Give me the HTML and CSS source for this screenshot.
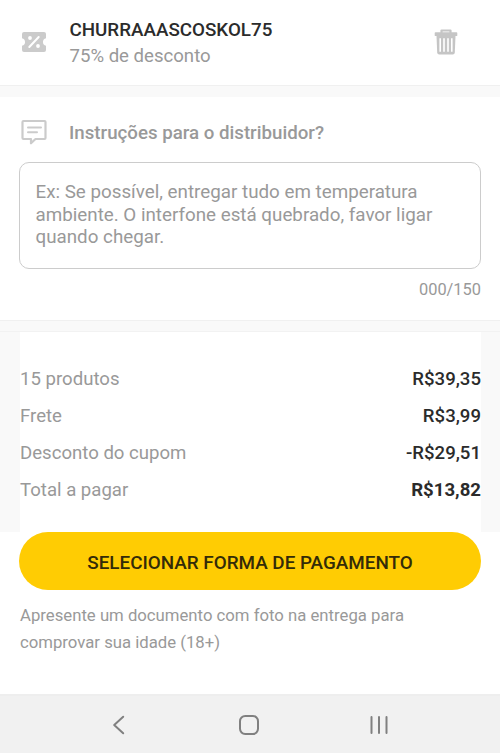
FILE: index.html
```html
<!DOCTYPE html>
<html lang="pt-BR">
<head>
<meta charset="utf-8">
<title>Pagamento</title>
<link rel="stylesheet" href="styles.css">
</head>
<body>
<section class="coupon">
  <svg class="icon" width="26" height="22" viewBox="0 0 26 22"><path fill="#cbcbcb" d="M3 1h20q2 0 2 2v4.200a3.900 3.900 0 0 0 0 7.600V19q0 2-2 2H3q-2 0-2-2v-4.200a3.900 3.900 0 0 0 0-7.600V3q0-2 2-2z"/><path d="M8.300 16L17.700 6" stroke="#fff" stroke-width="2" stroke-linecap="round"/><circle cx="9" cy="7" r="1.900" fill="#fff"/><circle cx="17" cy="15" r="1.900" fill="#fff"/></svg>
  <div class="coupon-text">
    <div class="code">CHURRAAASCOSKOL75</div>
    <div class="discount">75% de desconto</div>
  </div>
  <svg class="trash" width="24" height="28" viewBox="0 0 24 28"><path fill="none" stroke="#c5c5c5" stroke-width="2.200" stroke-linejoin="round" d="M7.500 5V2.500h9V5"/><path fill="#c5c5c5" d="M1.500 4.300h21q.8 0 .8.800v2.300q0 .7-.8.700h-21q-.8 0-.8-.7V5.100q0-.8.8-.8z"/><path fill="#c5c5c5" d="M2.500 8h19l-.7 16.500q-.1 2-2 2H5.200q-1.900 0-2-2z"/><path stroke="#fff" stroke-width="1.600" d="M6.200 10.200v13.600M10 10.200v13.600M14 10.200v13.600M17.800 10.200v13.600"/></svg>
</section>
<div class="divider"></div>
<section class="notes">
  <div class="notes-head">
    <svg class="icon" width="26" height="26" viewBox="0 0 26 26"><path fill="none" stroke="#cbcbcb" stroke-width="2.200" stroke-linejoin="round" d="M2.500 2h21q1 0 1 1v16q0 1-1 1H14.500L10 24.300V20H2.500q-1 0-1-1V3q0-1 1-1z"/><path stroke="#cbcbcb" stroke-width="2" stroke-linecap="round" d="M7 8.500h13M7 13.200h9"/></svg>
    <h2>Instruções para o distribuidor?</h2>
  </div>
  <div class="field">Ex: Se possível, entregar tudo em temperatura<br>ambiente. O interfone está quebrado, favor ligar<br>quando chegar.</div>
  <div class="counter">000/150</div>
</section>
<div class="divider divider-lower"></div>
<div class="summary-wrap">
  <section class="summary">
    <div class="row"><span>15 produtos</span><strong>R$39,35</strong></div>
    <div class="row"><span>Frete</span><strong>R$3,99</strong></div>
    <div class="row"><span>Desconto do cupom</span><strong>-R$29,51</strong></div>
    <div class="row total"><span>Total a pagar</span><strong>R$13,82</strong></div>
  </section>
</div>
<section class="action">
  <button type="button">SELECIONAR FORMA DE PAGAMENTO</button>
  <p>Apresente um documento com foto na entrega para<br>comprovar sua idade (18+)</p>
</section>
<nav>
  <svg width="20" height="24" viewBox="0 0 20 24"><path d="M14.200 3.700L5.200 12l9 8.300"/></svg>
  <svg width="24" height="24" viewBox="0 0 24 24"><rect x="3" y="3" width="18" height="18" rx="5.200"/></svg>
  <svg width="20" height="24" viewBox="0 0 20 24"><path d="M2.500 4v16M10 4v16M17.500 4v16"/></svg>
</nav>
</body>
</html>
```
FILE: styles.css
```css
* { box-sizing: border-box; }
body {
  margin: 0;
  height: 753px;
  display: flex;
  flex-direction: column;
  overflow: hidden;
  background: #fff;
  color: #999;
  font: 18.6px/22px Roboto, "Liberation Sans", sans-serif;
}
svg { display: block; flex: none; }
.coupon {
  height: 85px;
  padding: 17px 42px 0 21px;
  display: flex;
  align-items: flex-start;
}
.coupon .icon { margin-top: 14px; }
.coupon-text { flex: 1; margin-left: 22.500px; line-height: 26px; }
.code { color: #2b2b2b; font-size: 18.800px; font-weight: 500; }
.trash { margin-top: 11px; }
.divider {
  height: 12px;
  flex: none;
  background: #f9f9f9;
  border-top: 1px solid #f0f0f0;
}
.divider-lower { border-bottom: 1px solid #f2f2f2; }
.notes { height: 223px; padding: 22px 19px 0; }
.notes-head { display: flex; height: 26px; padding-left: 2px; }
.notes-head h2 {
  margin: 0 0 0 22px;
  font-size: 18.700px;
  line-height: 28px;
  font-weight: 500;
}
.field {
  height: 107px;
  margin-top: 17px;
  padding: 18px 15.500px;
  border: 1.500px solid #ccc;
  border-radius: 10px;
  white-space: nowrap;
  font-size: 18.800px;
  line-height: 22.500px;
}
.counter { margin-top: 10px; text-align: right; font-size: 16.400px; }
.summary-wrap { height: 200px; padding: 0 19px 0 20px; background: #f9f9f9; }
.summary { height: 100%; padding: 28.500px 0 0; background: #fff; }
.row {
  height: 36.900px;
  display: flex;
  align-items: center;
  justify-content: space-between;
}
.row strong { color: #2b2b2b; font-weight: 500; }
.row.total strong { font-weight: 700; }
.action { flex: 1; padding: 0 19px; }
button {
  display: block;
  width: 100%;
  height: 58px;
  padding: 4px 0 0;
  border: 0;
  border-radius: 29px;
  background: #ffcc03;
  color: #332b08;
  font: 500 18.850px/26px Roboto, "Liberation Sans", sans-serif;
}
p { margin: 12px 0 0 1px; font-size: 16.730px; line-height: 27px; }
nav {
  height: 59px;
  flex: none;
  padding: 1px 111px 0 109px;
  display: flex;
  align-items: center;
  justify-content: space-between;
  background: #f1f1f1;
  border-top: 2px solid #eee;
}
nav svg { fill: none; stroke: #808080; stroke-width: 2; stroke-linecap: round; stroke-linejoin: round; }
```
